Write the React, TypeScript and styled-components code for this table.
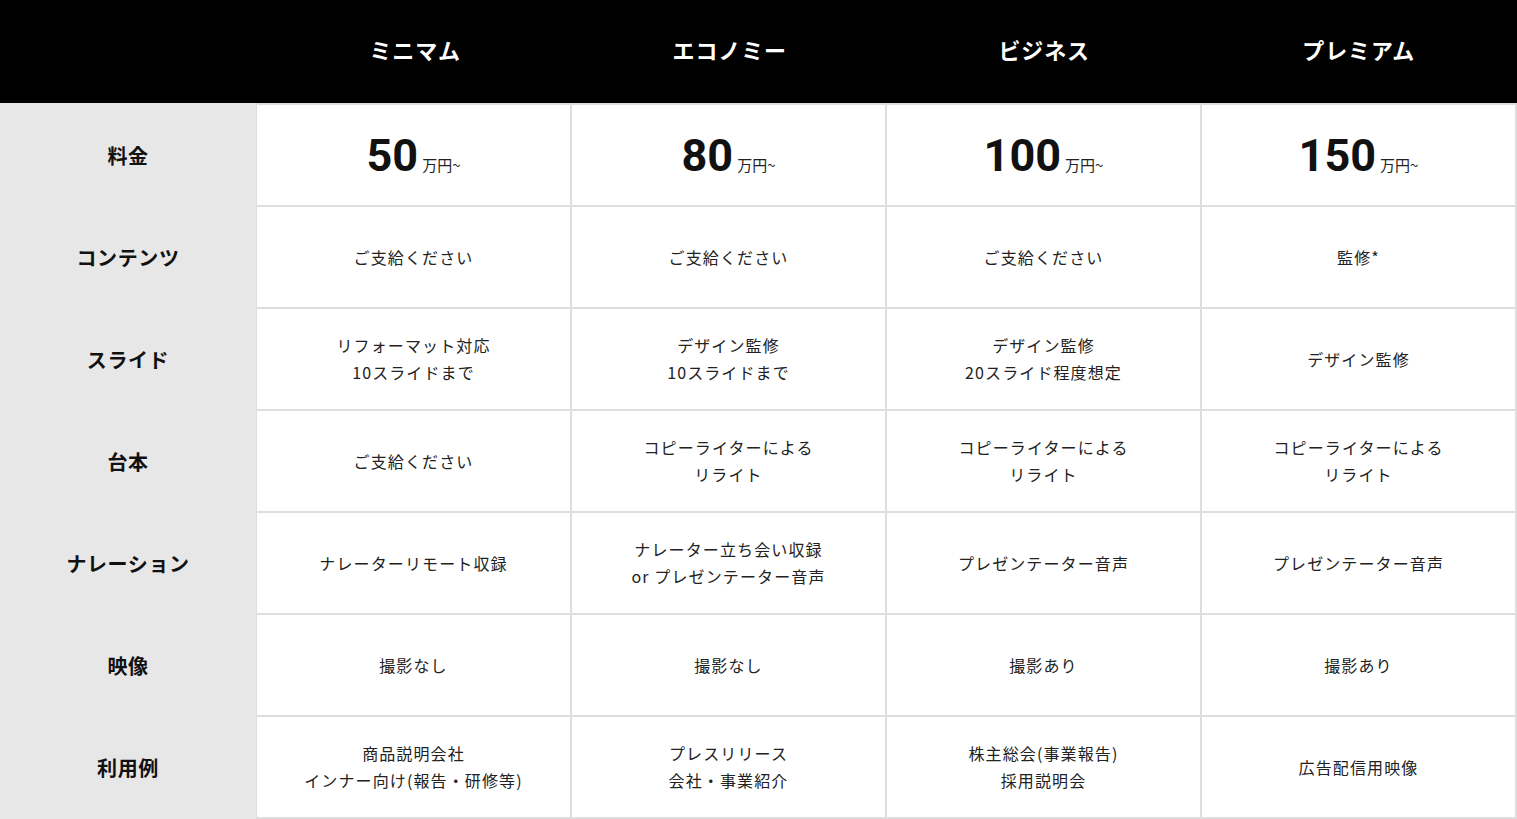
import styled, { createGlobalStyle } from 'styled-components';

const GlobalStyle = createGlobalStyle`
  html, body {
    margin: 0;
    padding: 0;
    background: #fff;
  }
  body {
    font-family: "Noto Sans CJK JP", "Noto Sans", sans-serif;
    color: #222;
  }
`;

const plans = ['ミニマム', 'エコノミー', 'ビジネス', 'プレミアム'];
const prices = ['50', '80', '100', '150'];

const rows: { label: string; values: string[] }[] = [
  { label: 'コンテンツ', values: ['ご支給ください', 'ご支給ください', 'ご支給ください', '監修*'] },
  {
    label: 'スライド',
    values: ['リフォーマット対応\n10スライドまで', 'デザイン監修\n10スライドまで', 'デザイン監修\n20スライド程度想定', 'デザイン監修'],
  },
  {
    label: '台本',
    values: ['ご支給ください', 'コピーライターによる\nリライト', 'コピーライターによる\nリライト', 'コピーライターによる\nリライト'],
  },
  {
    label: 'ナレーション',
    values: ['ナレーターリモート収録', 'ナレーター立ち会い収録\nor プレゼンテーター音声', 'プレゼンテーター音声', 'プレゼンテーター音声'],
  },
  { label: '映像', values: ['撮影なし', '撮影なし', '撮影あり', '撮影あり'] },
  {
    label: '利用例',
    values: ['商品説明会社\nインナー向け(報告・研修等)', 'プレスリリース\n会社・事業紹介', '株主総会(事業報告)\n採用説明会', '広告配信用映像'],
  },
];

const App = () => {
  return (
    <>
      <GlobalStyle />
      <Table>
        <HeaderRow>
          <span />
          {plans.map((p) => (
            <PlanName key={p}>{p}</PlanName>
          ))}
        </HeaderRow>
        <Body>
          <LabelColumn>
            <Label>料金</Label>
            {rows.map((r) => (
              <Label key={r.label}>{r.label}</Label>
            ))}
          </LabelColumn>
          <CellGrid>
            {prices.map((p) => (
              <Cell key={p}>
                <Price>
                  <Amount>{p}</Amount>
                  <Unit>万円~</Unit>
                </Price>
              </Cell>
            ))}
            {rows.map((r) =>
              r.values.map((v, i) => <Cell key={r.label + i}>{v}</Cell>)
            )}
          </CellGrid>
        </Body>
      </Table>
    </>
  );
};

const Table = styled.div`
  width: 1517px;
  display: flex;
  flex-direction: column;
`;

const HeaderRow = styled.div`
  display: grid;
  grid-template-columns: 256px repeat(4, 1fr);
  column-gap: 2px;
  padding: 0 2px 0 1px;
  height: 103px;
  align-items: center;
  background: #000;
`;

const PlanName = styled.div`
  color: #fff;
  font-size: 22px;
  font-weight: 700;
  letter-spacing: 0.04em;
  text-align: center;
  margin-top: -6px;
`;

const Body = styled.div`
  display: flex;
`;

const LabelColumn = styled.div`
  width: 256px;
  flex-shrink: 0;
  background: #e7e7e7;
  padding-top: 1px;
  display: flex;
  flex-direction: column;
`;

const Label = styled.div`
  height: 102px;
  display: flex;
  align-items: center;
  justify-content: center;
  font-size: 20px;
  font-weight: 700;
  letter-spacing: 0.03em;
  color: #111;
`;

const CellGrid = styled.div`
  flex: 1;
  display: grid;
  grid-template-columns: repeat(4, 1fr);
  grid-auto-rows: 100px;
  gap: 2px;
  padding: 2px 2px 2px 1px;
  background: #dedede;
`;

const Cell = styled.div`
  background: #fff;
  display: flex;
  align-items: center;
  justify-content: center;
  text-align: center;
  white-space: pre-line;
  font-size: 16px;
  line-height: 27px;
  letter-spacing: 0.07em;
  color: #222;
`;

const Price = styled.div`
  display: flex;
  align-items: baseline;
  gap: 4px;
`;

const Amount = styled.span`
  font-family: Roboto, "Liberation Sans", sans-serif;
  font-size: 45px;
  font-weight: 700;
  line-height: 1;
  letter-spacing: 0;
  color: #111;
`;

const Unit = styled.span`
  font-size: 15px;
  letter-spacing: 0;
`;

export default App;
